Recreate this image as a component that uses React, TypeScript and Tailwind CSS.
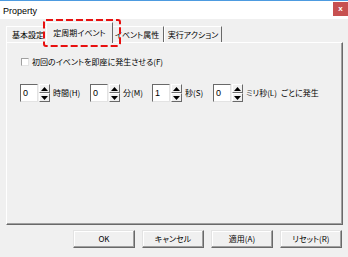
import React from "react";

const jp = "font-['Noto_Sans_CJK_JP',sans-serif] [font-feature-settings:'palt'] text-[8px] leading-none text-black whitespace-nowrap";

function Spin() {
  return (
    <div className="flex flex-col w-[11px] h-[18px] ml-[1px]">
      {[0, 1].map((i) => (
        <div
          key={i}
          className="flex-1 flex items-center justify-center bg-[#f0f0f0] border border-t-white border-l-white border-r-[#696969] border-b-[#696969]"
        >
          <svg width="7" height="4" viewBox="0 0 7 4">
            {i === 0 ? <polygon points="0,4 7,4 3.5,0" fill="#000" /> : <polygon points="0,0 7,0 3.5,4" fill="#000" />}
          </svg>
        </div>
      ))}
    </div>
  );
}

function Box({ v }: { v: string }) {
  return (
    <div className="w-[18px] h-[18px] bg-white border border-t-[#696969] border-l-[#696969] border-r-[#e3e3e3] border-b-[#e3e3e3] flex items-center pl-[2px]">
      <span className="font-['Liberation_Sans',sans-serif] text-[9px] leading-none">{v}</span>
    </div>
  );
}

function Btn({ children }: { children: React.ReactNode }) {
  return (
    <div className={`w-[62px] h-[18px] flex items-center justify-center border border-t-[#e3e3e3] border-l-[#e3e3e3] border-r-[#696969] border-b-[#696969] shadow-[inset_-1px_-1px_0_#a0a0a0,inset_1px_1px_0_#fff] bg-[#f0f0f0] ${jp}`}>
      {children}
    </div>
  );
}

export default function App() {
  return (
    <div className="relative w-[348px] h-[257px] overflow-hidden bg-[#f0f0f0]">
      {/* title bar */}
      <div className="h-[19px] bg-white border-t border-[#4d9be0] flex items-start justify-between">
        <span className="font-['Liberation_Sans',sans-serif] text-[9px] leading-none ml-[3px] mt-[6px] text-black">Property</span>
        <div className="w-[15px] h-[14px] mt-[1px] bg-[#c75050] flex items-center justify-center">
          <span className="font-['Liberation_Sans',sans-serif] text-[8px] font-bold leading-none text-white">x</span>
        </div>
      </div>

      {/* tabs */}
      <div className="flex items-end h-[23px] pl-[6px]">
        <div className={`w-[42px] h-[16px] flex items-center pl-[5px] border-t border-l border-white border-r border-r-[#a0a0a0] ${jp}`}>基本設定</div>
        <div className={`relative z-10 -ml-[2px] -mr-[2px] w-[67px] h-[21px] -mb-px bg-[#f0f0f0] flex items-center justify-center border-t border-l border-white border-r border-r-[#696969] ${jp}`}>
          定周期イベント
        </div>
        <div className={`w-[53px] h-[16px] flex items-center justify-center border-t border-white border-r border-r-[#696969] ${jp}`}>イベント属性</div>
        <div className={`w-[58px] h-[16px] flex items-center justify-center border-t border-l border-white border-r border-r-[#696969] ${jp}`}>実行アクション</div>
      </div>

      {/* panel */}
      <div className="ml-[6px] w-[337px] h-[183px] border-t border-l border-white border-r border-b border-r-[#696969] border-b-[#696969] shadow-[inset_-1px_-1px_0_#a0a0a0] pl-[14px] pt-[14px]">
        <div className="flex items-center h-[10px]">
          <div className="w-[8px] h-[8px] bg-white border border-t-[#a0a0a0] border-l-[#a0a0a0] border-r-[#e3e3e3] border-b-[#e3e3e3]" />
          <span className={`ml-[3px] ${jp}`}>初回のイベントを即座に発生させる(F)</span>
        </div>

        <div className="flex items-center h-[18px] mt-[17px] -ml-[1px]">
          <Box v="0" />
          <Spin />
          <span className={`ml-[3px] w-[37px] ${jp}`}>時間(H)</span>
          <Box v="0" />
          <Spin />
          <span className={`ml-[3px] w-[29px] ${jp}`}>分(M)</span>
          <Box v="1" />
          <Spin />
          <span className={`ml-[3px] w-[28px] ${jp}`}>秒(S)</span>
          <Box v="0" />
          <Spin />
          <span className={`ml-[3px] w-[35px] ${jp}`}>ミリ秒(L)</span>
          <span className={jp}>ごとに発生</span>
        </div>
      </div>

      {/* buttons */}
      <div className="flex justify-end gap-[7px] pr-[6px] mt-[5px]">
        <Btn>OK</Btn>
        <Btn>キャンセル</Btn>
        <Btn>適用(A)</Btn>
        <Btn>リセット(R)</Btn>
      </div>

      {/* annotation */}
      <svg className="absolute left-[43px] top-[19px]" width="78" height="28" viewBox="0 0 78 28">
        <rect x="1" y="1" width="76" height="26" rx="2" fill="none" stroke="#e8100f" strokeWidth="2" strokeDasharray="7 3" />
      </svg>
    </div>
  );
}
